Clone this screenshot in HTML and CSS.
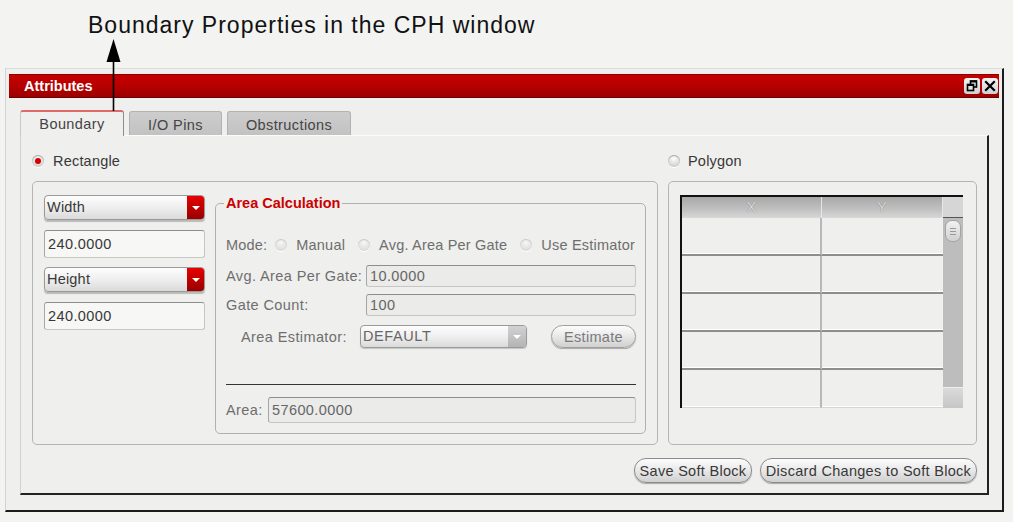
FILE: index.html
```html
<!DOCTYPE html>
<html>
<head>
<meta charset="utf-8">
<link rel="stylesheet" href="styles.css">
</head>
<body>
<div class="page">
  <div class="caption">Boundary Properties in the CPH window</div>
  <svg class="arrow" width="17" height="73" viewBox="0 0 17 73">
    <polygon points="8.5,1 1.5,24 15.5,24" fill="#000"/>
    <line x1="8.5" y1="23" x2="8.5" y2="73" stroke="#000" stroke-width="1.6"/>
  </svg>
  <div class="window">
    <div class="titlebar">
      <span class="title">Attributes</span>
      <div class="tb-btns">
        <span class="tb-btn">
          <svg width="16" height="16" viewBox="0 0 16 16">
            <rect x="6.5" y="3" width="6" height="6" fill="none" stroke="#000" stroke-width="1.6"/>
            <rect x="6" y="2.5" width="7" height="2" fill="#000"/>
            <rect x="3.5" y="6.5" width="6" height="6" fill="#e4e4e4" stroke="#000" stroke-width="1.6"/>
            <rect x="3" y="6" width="7" height="2" fill="#000"/>
          </svg>
        </span>
        <span class="tb-btn">
          <svg width="16" height="16" viewBox="0 0 16 16">
            <path d="M4 4 L12 12 M12 4 L4 12" stroke="#000" stroke-width="2.2" stroke-linecap="square"/>
          </svg>
        </span>
      </div>
    </div>
    <div class="tabs">
      <div class="tab active">Boundary</div>
      <div class="tab io">I/O Pins</div>
      <div class="tab obs">Obstructions</div>
    </div>
    <div class="pane">
      <div class="cols">
        <div class="col-left">
          <div class="radio-row"><span class="radio on"></span><span>Rectangle</span></div>
          <div class="group left-group">
            <div class="dims">
              <div class="combo"><span class="val">Width</span><span class="drop"><i></i></span></div>
              <div class="field">240.0000</div>
              <div class="combo"><span class="val">Height</span><span class="drop"><i></i></span></div>
              <div class="field">240.0000</div>
            </div>
            <fieldset class="area">
              <legend>Area Calculation</legend>
              <div class="frow mode">
                <span class="lbl">Mode:</span>
                <span class="radio dis first"></span><span>Manual</span>
                <span class="radio dis"></span><span>Avg. Area Per Gate</span>
                <span class="radio dis"></span><span>Use Estimator</span>
              </div>
              <div class="frow avg">
                <span class="lbl wide">Avg. Area Per Gate:</span>
                <div class="field dis">10.0000</div>
              </div>
              <div class="frow gate">
                <span class="lbl wide">Gate Count:</span>
                <div class="field dis">100</div>
              </div>
              <div class="frow est">
                <span class="lbl estlbl">Area Estimator:</span>
                <div class="combo dis"><span class="val">DEFAULT</span><span class="drop"><i></i></span></div>
                <button class="btn estimate">Estimate</button>
              </div>
              <div class="sep"></div>
              <div class="frow arearow">
                <span class="lbl arealbl">Area:</span>
                <div class="field dis">57600.0000</div>
              </div>
            </fieldset>
          </div>
        </div>
        <div class="col-right">
          <div class="radio-row"><span class="radio"></span><span>Polygon</span></div>
          <div class="group right-group">
            <div class="tbl">
              <div class="th">X</div>
              <div class="th">Y</div>
              <div class="th corner"></div>
              <div class="td c1"></div><div class="td c2"></div>
              <div class="vscroll">
                <div class="thumb"><i></i><i></i><i></i></div>
                <div class="sbot"></div>
              </div>
              <div class="td c1"></div><div class="td c2"></div>
              <div class="td c1"></div><div class="td c2"></div>
              <div class="td c1"></div><div class="td c2"></div>
              <div class="td c1 last"></div><div class="td c2 last"></div>
            </div>
          </div>
        </div>
      </div>
      <div class="actions">
        <button class="btn save">Save Soft Block</button>
        <button class="btn discard">Discard Changes to Soft Block</button>
      </div>
    </div>
  </div>
</div>
</body>
</html>
```

FILE: styles.css
```css
* { box-sizing: border-box; }
body {
  margin: 0;
  background: #f3f3f1;
  font-family: "Liberation Sans", Arial, sans-serif;
  font-size: 14.5px;
  letter-spacing: 0.2px;
  color: #383838;
}
.page { position: relative; width: 1013px; height: 522px; overflow: hidden; }
.caption {
  padding: 12px 0 0 88px;
  height: 68px;
  font-size: 23px;
  line-height: 26px;
  letter-spacing: 1px;
  color: #111;
}
.arrow { position: absolute; left: 105px; top: 38px; z-index: 5; }

.window {
  margin-left: 5px;
  width: 999px;
  background: #efefed;
  border-left: 1px solid #d4d4d2;
  border-top: 1px solid #dcdcda;
  border-right: 2px solid #1c1c1c;
  border-bottom: 2px solid #1c1c1c;
  padding: 5px 3px 15px 3px;
}
.titlebar {
  height: 24px;
  display: flex;
  align-items: center;
  justify-content: space-between;
  padding: 0 1px 0 15px;
  background: linear-gradient(#c60000, #b60000 50%, #9c0000);
  border-top: 1px solid #8c0000;
  border-bottom: 1px solid #6a0000;
}
.title { color: #fff; font-weight: bold; letter-spacing: 0; }
.tb-btns { display: flex; gap: 2px; }
.tb-btn {
  width: 16px; height: 16px;
  border-radius: 3px;
  background: linear-gradient(#f4f4f4, #cfcfcf);
  display: flex;
}

.tabs {
  display: flex;
  align-items: flex-end;
  gap: 5px;
  height: 25px;
  margin: 12px 0 0 11px;
  position: relative;
  z-index: 1;
}
.tab {
  height: 24px;
  text-align: center;
  line-height: 26px;
  background: linear-gradient(#cdcdcd, #c2c2c2);
  border: 1px solid #b2b2b2;
  border-bottom: none;
  border-radius: 3px 3px 0 0;
  color: #444;
  letter-spacing: 0.4px;
}
.tab.active {
  width: 104px;
  height: 26px;
  margin-bottom: -1px;
  background: #efefed;
  border-top: 2px solid #e06a6a;
  border-left: 1px solid #c8c8c6;
  border-right: 1px solid #8e8e8e;
  line-height: 24px;
}
.tab.io { width: 93px; }
.tab.obs { width: 124px; }

.pane {
  margin: 0 10px 0 11px;
  border-top: 1px solid #fcfcfc;
  border-left: 1px solid #d2d2d0;
  border-right: 2px solid #222;
  border-bottom: 2px solid #222;
  padding: 16px 10px 10px 11px;
}
.cols { display: flex; gap: 10px; }
.col-left { flex: 0 0 626px; min-width: 0; }
.col-right { flex: 1; min-width: 0; }
.radio-row { height: 18px; display: flex; align-items: center; gap: 9px; }
.col-right .radio-row { gap: 8px; }

.radio {
  display: inline-block;
  position: relative;
  width: 12px; height: 12px;
  border-radius: 50%;
  background: radial-gradient(circle at 50% 30%, #ffffff, #d4d4d4 70%, #bdbdbd);
  box-shadow: 0 1px 0 #fff, inset 0 1px 1px rgba(0,0,0,.3);
  flex: none;
}
.radio.on::after {
  content: "";
  position: absolute;
  left: 3px; top: 3px;
  width: 6px; height: 6px;
  border-radius: 50%;
  background: #d40000;
}
.radio.dis { background: radial-gradient(circle at 50% 30%, #f6f6f6, #dedede 70%, #cfcfcf); box-shadow: 0 1px 0 #fff, inset 0 1px 1px rgba(0,0,0,.15); }

.group {
  margin-top: 11px;
  height: 264px;
  border: 1px solid #b5b5b3;
  border-radius: 5px;
}
.left-group { display: flex; padding: 13px 11px 10px 11px; }
.dims { width: 161px; flex: none; display: flex; flex-direction: column; }
.dims .combo + .field { margin-top: 10px; }
.dims .field + .combo { margin-top: 9px; }

.combo {
  height: 25px;
  display: flex;
  border: 1px solid #9a9a9a;
  border-radius: 4px;
  background: linear-gradient(#fdfdfd, #ededed 55%, #dadada);
  box-shadow: 0 2px 1px rgba(0,0,0,.22);
  overflow: hidden;
}
.combo .val { flex: 1; padding-left: 2px; line-height: 23px; color: #383838; }
.combo .drop {
  width: 17px;
  background: linear-gradient(#e80000, #bb0000 55%, #980000);
  display: flex; align-items: center; justify-content: center;
}
.combo .drop i {
  width: 0; height: 0;
  border-left: 4px solid transparent;
  border-right: 4px solid transparent;
  border-top: 4px solid #fff;
}
.combo.dis { height: 23px; width: 167px; flex: none; box-shadow: 0 1px 1px rgba(0,0,0,.18); }
.combo.dis .val { line-height: 21px; color: #666; letter-spacing: 0.6px; }
.combo.dis .drop { background: linear-gradient(#d2d2d2, #b4b4b4); width: 18px; }

.field {
  height: 28px;
  border: 1px solid #c6c6c4;
  border-top-color: #8e8e8e;
  border-left-color: #a6a6a6;
  border-radius: 3px;
  background: #f7f7f5;
  padding-left: 3px;
  line-height: 26px;
  color: #383838;
  letter-spacing: 0.4px;
}
.field.dis { height: 22px; line-height: 20px; background: #ebebe9; color: #666; flex: 1; }

.area {
  flex: 1;
  margin: 0 0 0 10px;
  border: 1px solid #b0b0ae;
  border-radius: 5px;
  padding: 0 9px 9px 10px;
  min-width: 0;
}
.area legend {
  padding: 0 2px;
  margin-left: -2px;
  color: #cc0000;
  font-weight: bold;
  line-height: 17px;
  letter-spacing: 0;
}
.frow { display: flex; align-items: center; color: #6e6e6e; letter-spacing: 0.4px; white-space: nowrap; }
.lbl { flex: none; }
.mode { height: 20px; margin-top: 23px; letter-spacing: 0.2px; }
.mode span { flex: none; }
.mode .radio { margin: 0 9px 0 13px; }
.mode .radio.first { margin-left: 8px; margin-right: 9px; }
.avg { margin-top: 10px; }
.gate { margin-top: 7px; }
.wide { width: 140px; }
.est { margin-top: 9px; }
.estlbl { width: 134px; padding-left: 15px; }
.btn {
  font-family: inherit;
  font-size: 14.5px;
  height: 25px;
  border: 1px solid #8c8c8c;
  border-radius: 12px;
  background: linear-gradient(#fcfcfc, #e8e8e8 50%, #d0d0d0);
  box-shadow: 0 1px 1px rgba(0,0,0,.3);
  color: #383838;
  padding: 0;
  letter-spacing: 0.3px;
  white-space: nowrap;
}
.estimate { margin-left: 24px; width: 85px; height: 23px; color: #7a7a7a; border-color: #a0a0a0; }
.sep { margin-top: 36px; border-top: 1px solid #333; }
.arearow { margin-top: 12px; }
.arealbl { width: 42px; }
.arearow .field.dis { height: 26px; line-height: 24px; }

.right-group { padding: 13px 11px; }
.tbl {
  width: 283px;
  display: grid;
  grid-template-columns: 140px 121px 20px;
  grid-template-rows: 21px repeat(5, 38px);
  border-top: 2px solid #111;
  border-left: 2px solid #111;
}
.th {
  background: linear-gradient(#a8a8a8, #c4c4c4 65%, #d8d8d8);
  color: #dcdcdc;
  text-shadow: 0 0 1px #6a6a6a;
  text-align: center;
  line-height: 21px;
  border-right: 1px solid #e6e6e6;
}
.th.corner { background: #d6d6d6; border-bottom: 1px solid #555; border-right: none; }
.td { border-bottom: 2px solid #8e8e8e; box-shadow: inset 0 -1px 0 #fff; }
.td.c1 { border-right: 2px solid #b8b8b8; }
.td.last { border-bottom: 1px solid #d6d6d6; }
.vscroll {
  grid-column: 3;
  grid-row: 2 / span 5;
  background: #bdbdbd;
  display: flex;
  flex-direction: column;
  justify-content: space-between;
  padding-top: 2px;
}
.thumb {
  margin: 0 2px;
  height: 22px;
  border: 1px solid #a4a4a4;
  border-radius: 7px;
  background: linear-gradient(#f2f2f2, #d0d0d0);
  display: flex; flex-direction: column; align-items: center; justify-content: center; gap: 2px;
}
.thumb i { width: 6px; height: 1px; background: #999; }
.sbot { height: 21px; background: linear-gradient(#dadada, #c6c6c6); border-top: 1px solid #eee; }

.actions { display: flex; justify-content: flex-end; gap: 8px; margin-top: 13px; }
.save { width: 118px; }
.discard { width: 217px; }
```
